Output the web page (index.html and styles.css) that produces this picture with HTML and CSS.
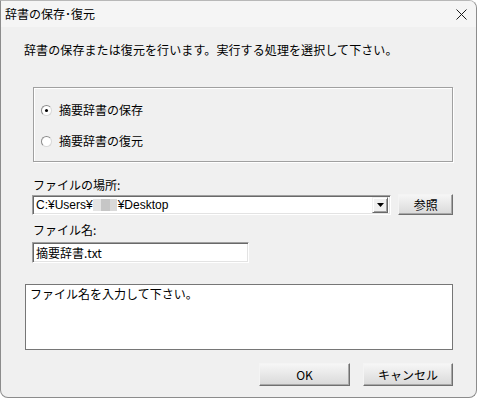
FILE: index.html
```html
<!DOCTYPE html>
<html lang="ja">
<head>
<meta charset="utf-8">
<title>辞書の保存･復元</title>
<link rel="stylesheet" href="styles.css">
</head>
<body>
<div class="window">
  <div class="titlebar">
    <span class="title">辞書の保存･復元</span>
    <svg class="close" width="11" height="11" viewBox="0 0 11 11"><path d="M0.5 0.5 L10.5 10.5 M10.5 0.5 L0.5 10.5" stroke="#1a1a1a" stroke-width="1" fill="none"/></svg>
  </div>
  <div class="body">
    <p class="intro">辞書の保存または復元を行います。実行する処理を選択して下さい。</p>
    <div class="group">
      <label class="radio-row"><span class="radio checked"></span><span>摘要辞書の保存</span></label>
      <label class="radio-row"><span class="radio"></span><span>摘要辞書の復元</span></label>
    </div>
    <div class="field-label first">ファイルの場所:</div>
    <div class="path-row">
      <div class="combo sunken">
        <span class="combo-text">C:¥Users¥<span class="blur b1"></span><span class="blur b2"></span><span class="blur b3"></span>¥Desktop</span>
        <span class="drop"><svg width="7" height="4" viewBox="0 0 7 4"><path d="M0 0 H7 L3.5 4 Z" fill="#000"/></svg></span>
      </div>
      <button class="btn browse">参照</button>
    </div>
    <div class="field-label second">ファイル名:</div>
    <div class="name-input sunken">摘要辞書.txt</div>
    <div class="message">ファイル名を入力して下さい。</div>
    <div class="actions">
      <button class="btn ok">OK</button>
      <button class="btn cancel">キャンセル</button>
    </div>
  </div>
</div>
</body>
</html>
```
FILE: styles.css
```css
* { box-sizing: border-box; }
html, body { margin: 0; padding: 0; background: #ffffff; }
body {
  font-family: "Noto Sans CJK JP", "Liberation Sans", sans-serif;
  font-size: 12px;
  color: #000;
  line-height: 16px;
}
.window {
  width: 477px;
  height: 398px;
  border: 1px solid #8c8c8c;
  border-top-color: #b8b8b8;
  border-radius: 0 8px 8px 8px;
  background: #f0f0f0;
  overflow: hidden;
}
.titlebar {
  height: 26px;
  background: #f5f5f5;
  display: flex;
  align-items: center;
  justify-content: space-between;
  padding: 0 9px 0 4px;
}
.title { font-size: 12px; }
.close { display: block; }
.body { padding: 0 23px 0 23px; }
.intro { margin: 15px 0 0 0; height: 16px; letter-spacing: 0.1px; }
.group {
  margin: 29px 0 0 9px;
  width: 420px;
  height: 75px;
  border: 1px solid #a0a0a0;
  box-shadow: inset 1px 1px 0 #ffffff, 1px 1px 0 #ffffff;
  padding: 14px 0 0 7px;
  display: flex;
  flex-direction: column;
  gap: 15px;
}
.radio-row { display: flex; align-items: center; gap: 7px; height: 16px; }
.radio {
  width: 11px; height: 11px;
  border-radius: 50%;
  border: 1px solid #8a8a8a;
  border-right-color: #d8d8d8;
  border-bottom-color: #d8d8d8;
  background: #fff;
  position: relative;
}
.radio.checked::after {
  content: "";
  position: absolute;
  left: 3px; top: 3px;
  width: 3px; height: 3px;
  border-radius: 50%;
  background: #000;
}
.field-label { margin-left: 9px; height: 16px; }
.field-label.first { margin-top: 15px; }
.field-label.second { margin-top: 7px; }
.sunken {
  background: #fff;
  border: 1px solid;
  border-color: #a0a0a0 #ffffff #ffffff #a0a0a0;
  box-shadow: inset 1px 1px 0 #696969, inset -1px -1px 0 #e3e3e3;
}
.path-row { display: flex; align-items: flex-start; margin-top: 1px; }
.combo {
  margin: 1px 0 0 8px;
  width: 361px;
  height: 20px;
  display: flex;
  align-items: center;
  justify-content: space-between;
  padding: 2px 2px 2px 3px;
}
.combo-text {
  font-family: "Liberation Sans", "Noto Sans CJK JP", sans-serif;
  font-size: 12px;
  display: flex;
  align-items: center;
}
.blur { display: inline-block; height: 12px; }
.b1 { width: 8px; background: #e4e4e4; }
.b2 { width: 9px; background: #c6c6c6; }
.b3 { width: 7px; background: #d9d9d9; margin-right: 1px; }
.drop {
  width: 16px;
  height: 16px;
  background: #f0f0f0;
  border: 1px solid;
  border-color: #f0f0f0 #696969 #696969 #f0f0f0;
  box-shadow: inset 1px 1px 0 #ffffff, inset -1px -1px 0 #a0a0a0;
  display: flex;
  align-items: center;
  justify-content: center;
}
.drop svg { display: block; }
.btn {
  font-family: "Noto Sans CJK JP", "Liberation Sans", sans-serif;
  font-size: 12px;
  color: #000;
  padding: 0;
  border: 1px solid;
  border-color: #f4f4f4 #707070 #707070 #f4f4f4;
  box-shadow: inset -1px -1px 0 #a8a8a8;
  background: linear-gradient(#f6f6f6, #d9d9d9);
  line-height: 16px;
}
.browse { width: 55px; height: 21px; margin-left: 7px; }
.name-input {
  margin: 4px 0 0 8px;
  width: 217px;
  height: 21px;
  padding: 1px 3px;
  line-height: 17px;
}
.message {
  margin: 21px 0 0 1px;
  width: 428px;
  height: 66px;
  background: #fff;
  border: 1px solid #767676;
  padding: 1px 4px;
}
.actions {
  margin-top: 13px;
  display: flex;
  justify-content: flex-end;
  gap: 13px;
}
.ok { width: 91px; height: 23px; }
.cancel { width: 90px; height: 23px; }
```
